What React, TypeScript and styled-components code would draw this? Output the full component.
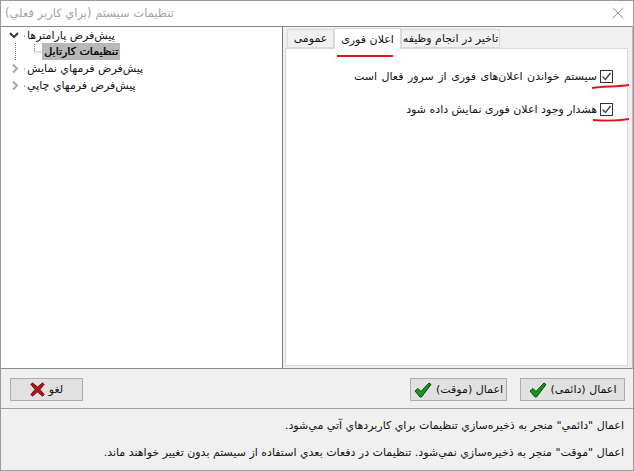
import styled, { createGlobalStyle } from "styled-components"
import { X } from "lucide-react"

const Global = createGlobalStyle`
  html, body { margin: 0; padding: 0; background: #f0f0f0; }
  * { box-sizing: border-box; }
`
const Window = styled.div`
  position: relative;
  width: 634px;
  height: 471px;
  display: flex;
  flex-direction: column;
  border: 1px solid #9a9a9a;
  background: #f0f0f0;
  font-family: "DejaVu Sans", sans-serif;
  font-size: 11px;
  color: #111;
`
const TitleBar = styled.div`
  height: 25px;
  display: flex;
  align-items: center;
  justify-content: space-between;
  padding: 0 5px 2px 4px;
  background: #fff;
  color: #a8a0a8;
  font-size: 11.5px;
`
const Main = styled.div`
  height: 343px;
  display: flex;
`
const TreePane = styled.div`
  width: 282px;
  background: #fff;
  border-top: 1px solid #8a8a8a;
  border-right: 1px solid #7a7a7a;
  border-bottom: 1px solid #8a8a8a;
`
const TreeRow = styled.div`
  height: 17px;
  display: flex;
  align-items: center;
  &:first-child { height: 16px; }
`
const Arrow = styled.svg`
  width: 22px;
  height: 17px;
  flex: none;
  margin-left: 4px;
`
const TreeLabel = styled.span`
  white-space: nowrap;
`
const Elbow = styled.svg`
  width: 41px;
  height: 17px;
  flex: none;
`
const Selected = styled.span`
  height: 17px;
  width: 78px;
  display: flex;
  align-items: center;
  justify-content: center;
  background: #b8b8b8;
  text-shadow: 0.5px 0 0 #111;
  white-space: nowrap;
`
const SidePane = styled.div`
  flex: 1;
  padding: 0 4px 2px 2px;
  display: flex;
  flex-direction: column;
  border-top: 1px solid #8a8a8a;
  border-right: 1px solid #bdbdbd;
  border-bottom: 1px solid #8a8a8a;
`
const TabStrip = styled.div`
  height: 21px;
  display: flex;
  align-items: flex-end;
  padding-left: 2px;
`
const Tab = styled.div<{ $active?: boolean; $w: number }>`
  width: ${p => p.$w}px;
  height: ${p => (p.$active ? 21 : 19)}px;
  display: flex;
  align-items: center;
  justify-content: center;
  white-space: nowrap;
  background: ${p => (p.$active ? "#fff" : "#f0f0f0")};
  border: 1px solid #d9d9d9;
  border-bottom: ${p => (p.$active ? "none" : "1px solid #d9d9d9")};
  margin-bottom: ${p => (p.$active ? -1 : 0)}px;
  position: relative;
  z-index: ${p => (p.$active ? 1 : 0)};
`
const TabBody = styled.div`
  flex: 1;
  padding: 21px 14px 0 0;
  background: #fff;
  border: 1px solid #d9d9d9;
  display: flex;
  flex-direction: column;
  gap: 20px;
`
const CheckRow = styled.label<{ $spread?: boolean }>`
  height: 13px;
  display: flex;
  align-items: center;
  justify-content: flex-end;
  gap: 3px;
  white-space: nowrap;
  word-spacing: ${p => (p.$spread ? 1 : 0)}px;
`
const Box = styled.span`
  width: 13px;
  height: 13px;
  flex: none;
  display: flex;
  align-items: center;
  justify-content: center;
  border: 1px solid #333;
  background: #fff;
`
const Actions = styled.div`
  height: 39px;
  display: flex;
  align-items: flex-start;
  padding: 9px 7px 0 9px;
`
const Button = styled.div<{ $w: number; $ml?: number }>`
  width: ${p => p.$w}px;
  height: 23px;
  margin-left: ${p => p.$ml ?? 0}px;
  display: flex;
  align-items: center;
  justify-content: center;
  gap: 4px;
  background: #e1e1e1;
  border: 1px solid #adadad;
  white-space: nowrap;
`
const Info = styled.div`
  flex: 1;
  padding: 9px 9px 0 0;
  border-top: 1px solid #9f9f9f;
  display: flex;
  flex-direction: column;
  gap: 12px;
`
const InfoLine = styled.div`
  height: 15px;
  line-height: 15px;
  text-align: right;
  direction: rtl;
  white-space: nowrap;
`
const Marks = styled.svg`
  position: absolute;
  left: -1px;
  top: -1px;
  pointer-events: none;
`

const Down = () => (
  <Arrow viewBox="0 0 22 17">
    <path d="M5 6l4 4 4-4" fill="none" stroke="#3a3a3a" strokeWidth="2" />
    <circle cx="19.5" cy="9" r=".6" fill="#555" />
  </Arrow>
)
const Right = () => (
  <Arrow viewBox="0 0 22 17">
    <path d="M8 4.5l4 4-4 4" fill="none" stroke="#a8a8a8" strokeWidth="2" />
    <circle cx="19.5" cy="9" r=".6" fill="#555" />
  </Arrow>
)
const Tick = () => (
  <svg width="11" height="11" viewBox="0 0 11 11">
    <path d="M1.5 5.5l3 3 5-6.5" fill="none" stroke="#444" strokeWidth="1.4" />
  </svg>
)
const GreenCheck = () => (
  <svg width="18" height="16" viewBox="0 0 18 16">
    <path d="M1 9l3-2.5 3 3L15 1l2 1.5L7.5 15h-1.5z" fill="#169a16" stroke="#0a3f16" strokeWidth="1" />
  </svg>
)
const RedCross = () => (
  <svg width="15" height="15" viewBox="0 0 15 15">
    <path d="M2.5 .8L7.5 5 12.5 .8 14.2 2.5 10 7.5 14.2 12.5 12.5 14.2 7.5 10 2.5 14.2 .8 12.5 5 7.5 .8 2.5z" fill="#b3121a" stroke="#5d0a0e" strokeWidth=".8" />
  </svg>
)

export default function App() {
  return (
    <Window>
      <Global />
      <TitleBar>
        <span>تنظیمات سیستم (براي کاربر فعلي)</span>
        <X size={20} color="#8a8a8a" strokeWidth={1.1} />
      </TitleBar>

      <Main>
        <TreePane>
          <TreeRow>
            <Down />
            <TreeLabel>پیش‌فرض پارامترها</TreeLabel>
          </TreeRow>
          <TreeRow>
            <Elbow viewBox="0 0 41 17">
              <path d="M14.5 0v17M33.5 1v8H41" fill="none" stroke="#777" strokeDasharray="1 1" />
            </Elbow>
            <Selected>تنظیمات کارتابل</Selected>
          </TreeRow>
          <TreeRow>
            <Right />
            <TreeLabel>پیش‌فرض فرمهاي نمایش</TreeLabel>
          </TreeRow>
          <TreeRow>
            <Right />
            <TreeLabel>پیش‌فرض فرمهاي چاپي</TreeLabel>
          </TreeRow>
        </TreePane>

        <SidePane>
          <TabStrip>
            <Tab $w={47}>عمومی</Tab>
            <Tab $w={67} $active>اعلان فوری</Tab>
            <Tab $w={99}>تاخیر در انجام وظیفه</Tab>
          </TabStrip>
          <TabBody>
            <CheckRow $spread>
              <span>سیستم خواندن اعلان‌های فوری از سرور فعال است</span>
              <Box><Tick /></Box>
            </CheckRow>
            <CheckRow>
              <span>هشدار وجود اعلان فوری نمایش داده شود</span>
              <Box><Tick /></Box>
            </CheckRow>
          </TabBody>
        </SidePane>
      </Main>

      <Actions>
        <Button $w={73}><RedCross /><span>لغو</span></Button>
        <Button $w={97} $ml={327}><GreenCheck /><span>اعمال (موقت)</span></Button>
        <Button $w={105} $ml={13}><GreenCheck /><span>اعمال (دائمی)</span></Button>
      </Actions>

      <Info>
        <InfoLine>اعمال "دائمي" منجر به ذخیره‌سازي تنظیمات براي کاربردهاي آتي مي‌شود.</InfoLine>
        <InfoLine>اعمال "موقت" منجر به ذخیره‌سازي نمي‌شود. تنظیمات در دفعات بعدي استفاده از سیستم بدون تغییر خواهند ماند.</InfoLine>
      </Info>

      <Marks width="634" height="471" fill="none" stroke="#e0141c" strokeWidth="1.8">
        <path d="M337 56h56" />
        <path d="M592 88c12-2 24-1 37-3" />
        <path d="M593 120c12 1 24 1 36-1" />
      </Marks>
    </Window>
  )
}
